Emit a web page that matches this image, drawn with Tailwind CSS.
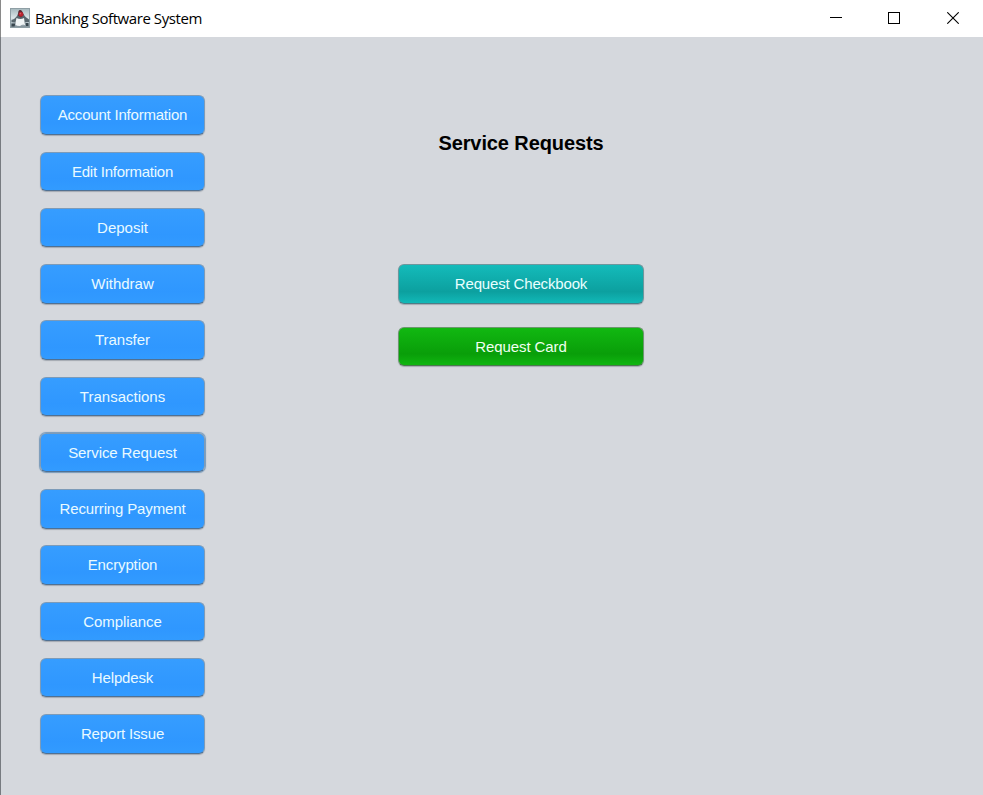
<!DOCTYPE html>
<html lang="en">
<head>
<meta charset="utf-8">
<title>Banking Software System</title>
<script src="https://cdn.jsdelivr.net/npm/@tailwindcss/browser@4"></script>
</head>
<body class="h-[795px] w-[983px] overflow-hidden bg-[#d5d8dd] font-['Liberation_Sans',Arial,sans-serif]">
<div class="flex h-full flex-col">
  <header class="flex h-[37px] shrink-0 items-center border-l border-[#8a8a8a] bg-white">
    <svg class="relative -top-px ml-[9px] h-5 w-5 shrink-0" viewBox="0 0 20 20">
      <defs><linearGradient id="g" x1="0" y1="0" x2="0" y2="1"><stop offset="0" stop-color="#a5b8bd"/><stop offset=".5" stop-color="#dce6e9"/><stop offset=".8" stop-color="#a9b7be"/><stop offset="1" stop-color="#7c8b94"/></linearGradient></defs>
      <rect x=".5" y=".5" width="19" height="19" fill="url(#g)" stroke="#8f9fa5"/>
      <path d="M9.500 2 Q12.500 3 14 7 Q15.500 9.500 19 11.500 V14 H15.500 L14 17 H6 L5 14.500 L1.500 14 V12 Q5 11 7 8 Z" fill="#59676e"/>
      <path d="M6.500 10 Q10.500 12 14 10 L15 17 Q12 16 10 18 Q7 18 5 16.500 Z" fill="#f1f5f6"/>
      <path d="M8.500 3 Q10 1 12 3 L13.500 7 L11 9.500 L8 7.500 Z" fill="#5c2933"/>
      <circle cx="11" cy="6.300" r="2.400" fill="#b9232f"/>
      <circle cx="10.400" cy="5.600" r=".8" fill="#d75a62"/>
      <path d="M1.500 15.500 H5.500 L4.500 18.500 H1.500 Z M15.500 15 H18.500 V18 H16 Z" fill="#38464e"/>
    </svg>
    <h1 class="relative -top-px ml-[5px] whitespace-nowrap font-['Open_Sans','Noto_Sans',sans-serif] text-[15px] leading-5 tracking-[-0.43px] text-black">Banking Software System</h1>
    <div class="ml-auto flex h-full items-center pr-6 pb-px text-black">
      <svg class="mr-[46px] h-3 w-3" viewBox="0 0 12 12"><path d="M0 5.500H12" stroke="currentColor"/></svg>
      <svg class="mr-[47px] h-3 w-3" viewBox="0 0 12 12"><rect x=".5" y=".5" width="11" height="11" fill="none" stroke="currentColor"/></svg>
      <svg class="h-3 w-3" viewBox="0 0 12 12"><path d="M.3.3 11.700 11.700M11.700.3.3 11.700" stroke="currentColor" stroke-width="1.100"/></svg>
    </div>
  </header>
  <main class="flex flex-1 border-l border-[#777b80] pl-[39px]">
    <nav id="nav" class="mt-[58.250px] flex w-[165px] shrink-0 flex-col gap-[16.750px]"></nav>
    <section class="ml-[193px] flex w-[246px] flex-col items-center pt-[93px]">
      <h2 class="whitespace-nowrap text-[20px] leading-[26px] font-bold tracking-[-0.1px] text-black">Service Requests</h2>
      <button class="mt-[108px] h-[39.500px] w-full rounded-[6px] border border-[#6c979d] border-b-[#4c7d86] bg-linear-to-b from-[#14bbba] via-[#0ca09f] via-70% to-[#12b9b8] pt-px text-[15px] tracking-[-0.16px] text-[#e9ffff] shadow-[0_1px_1px_#a3a9b1]">Request Checkbook</button>
      <button class="mt-[23px] h-[39.500px] w-full rounded-[6px] border border-[#6c966e] border-b-[#4a794d] bg-linear-to-b from-[#11b811] via-[#099e09] via-70% to-[#10b610] pt-px text-[15px] tracking-[-0.1px] text-[#f0fff0] shadow-[0_1px_1px_#a3a9b1]">Request Card</button>
    </section>
  </main>
</div>
<script>
const base = "h-[39.500px] w-full shrink-0 whitespace-nowrap rounded-[6px] border border-[#7c9bb9] border-b-[#507193] bg-linear-to-b from-[#369dff] via-[#2f97ff] via-70% to-[#329bff] pt-px text-[15px] text-[#e9faff] ";
const normal = "shadow-[0_1px_1px_#a3a9b1]";
const focused = "shadow-[0_0_1px_1px_#7799b8]";
const items = [["Account Information",-.21],["Edit Information",-.25],["Deposit",0],["Withdraw",0],["Transfer",-.05],["Transactions",0],["Service Request",-.1],["Recurring Payment",-.15],["Encryption",-.12],["Compliance",-.08],["Helpdesk",-.15],["Report Issue",-.16]];
items.forEach(([label, spacing]) => {
  const b = document.createElement("button");
  b.className = base + (label === "Service Request" ? focused : normal);
  b.style.letterSpacing = spacing + "px";
  b.textContent = label;
  document.getElementById("nav").append(b);
});
</script>
</body>
</html>
